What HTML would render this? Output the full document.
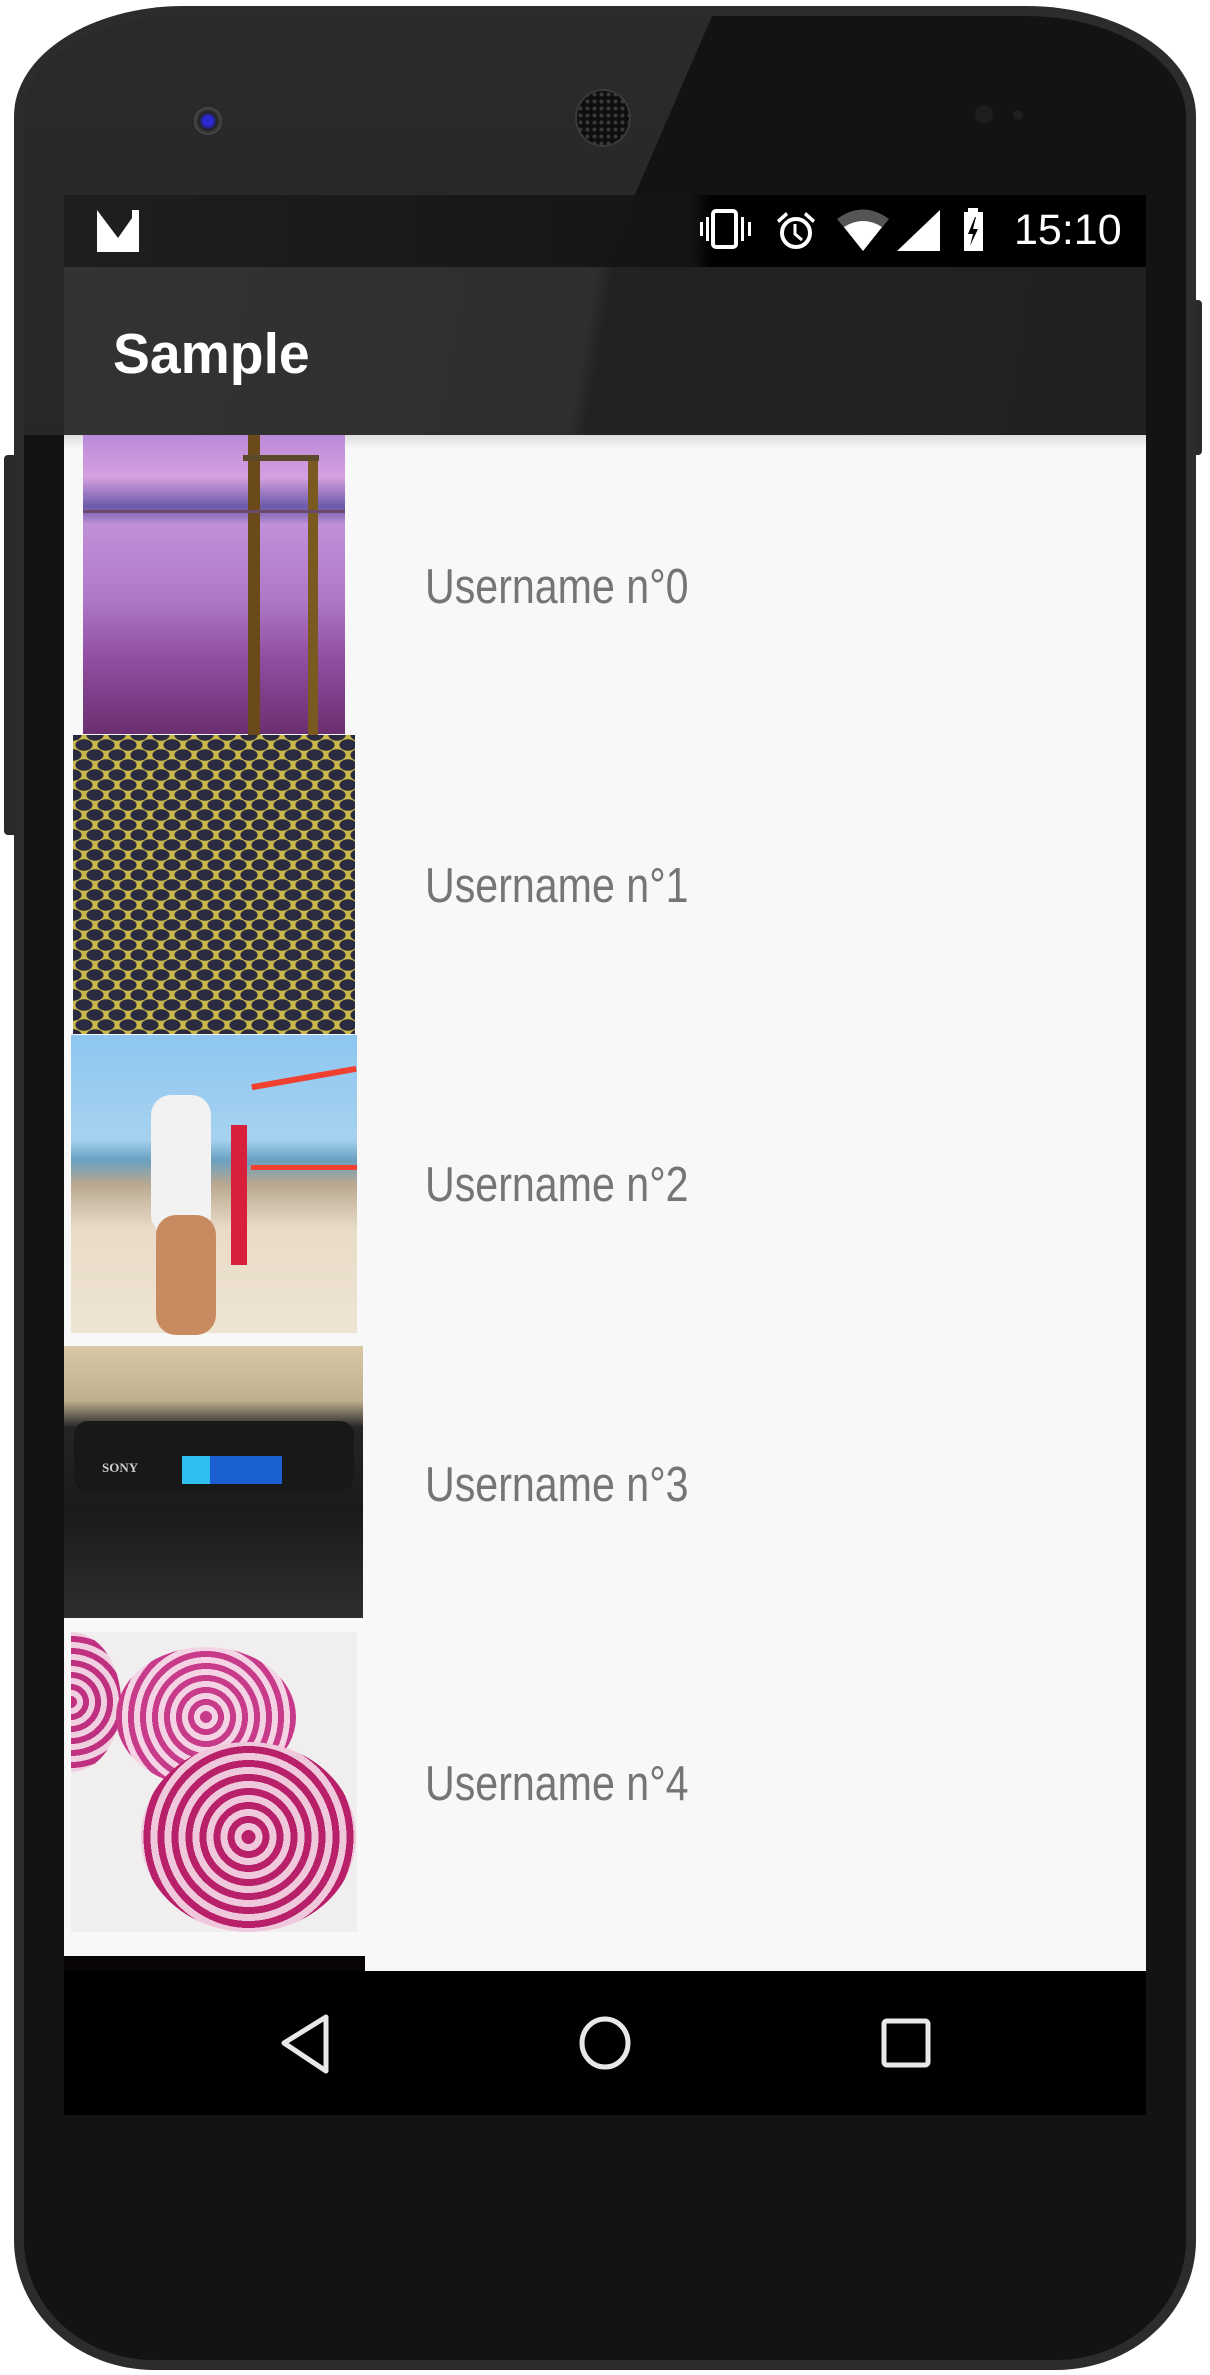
<!DOCTYPE html>
<html><head><meta charset="utf-8"><style>
*{margin:0;padding:0;box-sizing:border-box}
html,body{width:1210px;height:2375px;background:#fff;overflow:hidden;font-family:"Liberation Sans",sans-serif}
.abs{position:absolute}
#phone{left:14px;top:6px;width:1182px;height:2364px;border-radius:170px 170px 140px 140px/110px 110px 130px 130px;background:#2c2c2c;}
#inner{left:24px;top:16px;width:1162px;height:2344px;border-radius:160px 160px 130px 130px/100px 100px 120px 120px;background:#131313;overflow:hidden}
#glare{left:0;top:0;width:760px;height:440px;background:linear-gradient(180deg,#2a2a2a,#272727);clip-path:polygon(0 0,688px 0,507px 419px,0 419px)}
.screen{left:64px;width:1082px}
.txt{position:absolute;left:425px;font-size:49px;color:#757575;transform:scaleX(.84);transform-origin:0 50%;white-space:nowrap}
</style></head><body>
<div class="abs" style="left:1192px;top:300px;width:10px;height:155px;background:#2a2a2a;border-radius:0 4px 4px 0"></div>
<div class="abs" style="left:4px;top:455px;width:12px;height:380px;background:#2a2a2a;border-radius:4px 0 0 4px"></div>
<div id="phone" class="abs"></div>
<div id="inner" class="abs"><div id="glare" class="abs"></div></div>
<div class="abs" style="left:194px;top:107px;width:28px;height:28px;border-radius:50%;background:radial-gradient(circle,#2a2ad0 25%,#222 45%,#555 75%,#333 100%)"></div>
<div class="abs" style="left:575px;top:89px;width:56px;height:58px;border-radius:50%;background:radial-gradient(circle,#3a3a3a 1.5px,#0e0e0e 2.5px) 0 0/7px 7px,#111;border:2px solid #3a3a3a"></div>
<div class="abs" style="left:975px;top:105px;width:18px;height:18px;border-radius:50%;background:#1e1e1e"></div>
<div class="abs" style="left:1013px;top:110px;width:10px;height:10px;border-radius:50%;background:#1e1e1e"></div>
<div class="abs screen" style="top:195px;height:72px;background:linear-gradient(90deg,rgba(30,30,30,.95) 0,rgba(20,20,20,.95) 58%,#000 60%)"></div>
<svg class="abs" style="left:97px;top:210px" width="42" height="42" viewBox="0 0 42 42"><path d="M0 0 L21 28 L35 8 L35 0 L42 0 L42 42 L0 42 Z" fill="#fff"/></svg>
<svg class="abs" style="left:698px;top:208px" width="300" height="46" viewBox="0 0 300 46">
<g fill="#fff">
<rect x="2" y="14" width="3" height="14"/><rect x="8" y="9" width="3" height="24"/>
<rect x="15" y="3" width="23" height="36" rx="3" fill="none" stroke="#fff" stroke-width="4"/>
<rect x="43" y="9" width="3" height="24"/><rect x="50" y="14" width="3" height="14"/>
<circle cx="98" cy="25" r="14" fill="none" stroke="#fff" stroke-width="4"/>
<path d="M97 16 v10 l7 6" fill="none" stroke="#fff" stroke-width="3"/>
<path d="M79 12 l9 -8 l2 3 l-9 8z M117 12 l-9 -8 l-2 3 l9 8z"/>
<path d="M139 11 Q165 -8 191 11 L165 43 Z" fill="#555"/>
<path d="M146 19 Q165 7 184 19 L165 43 Z"/>
<path d="M199 43 L242 2 L242 43 Z"/>
<rect x="270" y="0" width="10" height="4"/>
<rect x="266" y="4" width="19" height="39"/>
<path d="M277 9 L270 26 L275 26 L272 38 L280 21 L275 21 L278 9 Z" fill="#000"/>
</g></svg>
<div class="abs" style="left:1014px;top:207px;font-size:43px;color:#fff;line-height:46px">15:10</div>
<div class="abs screen" style="top:267px;height:168px;background:linear-gradient(100deg,#333 0,#2e2e2e 48%,#222 49.5%,#212121 100%)"></div>
<div class="abs" style="left:113px;top:321px;font-size:57px;font-weight:bold;color:#fff;line-height:66px;transform:scaleX(.97);transform-origin:0 0">Sample</div>
<div class="abs screen" style="top:435px;height:1536px;background:#f8f8f8;overflow:hidden">
<div class="abs" style="left:0;top:0;width:1082px;height:14px;background:linear-gradient(#ddd,#f8f8f8)"></div>
</div>
<div class="abs" style="left:83px;top:435px;width:262px;height:299px;background:linear-gradient(180deg,#b98ad8 0,#d6a0e0 14%,#6a5aa8 24%,#c090d8 30%,#b078c8 55%,#904ea0 75%,#6a2f70 100%)">
<div class="abs" style="left:165px;top:0;width:12px;height:300px;background:#6a4a1a"></div>
<div class="abs" style="left:225px;top:20px;width:10px;height:280px;background:#7a5a20"></div>
<div class="abs" style="left:160px;top:20px;width:76px;height:6px;background:#5a4a2a"></div>
<div class="abs" style="left:0;top:75px;width:262px;height:3px;background:#6a4a6a"></div>
</div>
<div class="abs" style="left:73px;top:735px;width:282px;height:299px;background:radial-gradient(ellipse 9px 6px,#2a2a40 90%,transparent 100%) 0 0/22px 20px,radial-gradient(ellipse 9px 6px,#2a2a40 90%,transparent 100%) 11px 10px/22px 20px,#c9b84a"></div>
<div class="abs" style="left:71px;top:1035px;width:286px;height:298px;background:linear-gradient(180deg,#8ec6f0 0,#a6d2f0 35%,#6aa0c0 42%,#b8a890 50%,#e8dcc8 65%,#efe4d2 100%)">
<div class="abs" style="left:80px;top:60px;width:60px;height:140px;background:#f2f2f2;border-radius:20px"></div>
<div class="abs" style="left:85px;top:180px;width:60px;height:120px;background:#c88a60;border-radius:20px"></div>
<div class="abs" style="left:160px;top:90px;width:16px;height:140px;background:#d8203a"></div>
<div class="abs" style="left:180px;top:40px;width:106px;height:6px;background:#f04030;transform:rotate(-10deg)"></div>
<div class="abs" style="left:180px;top:130px;width:106px;height:5px;background:#f04030"></div>
</div>
<div class="abs" style="left:64px;top:1346px;width:299px;height:272px;background:linear-gradient(180deg,#d8c8a8 0,#c0b090 20%,#252525 30%,#1a1a1a 60%,#2e2e2e 100%)">
<div class="abs" style="left:10px;top:75px;width:280px;height:70px;background:#181818;border-radius:14px"></div>
<div class="abs" style="left:118px;top:110px;width:100px;height:28px;background:#1a60d0"></div>
<div class="abs" style="left:118px;top:110px;width:28px;height:28px;background:#30c0f0"></div>
<div class="abs" style="left:38px;top:114px;font-size:13px;color:#ccc;font-family:'Liberation Serif',serif;font-weight:bold">SONY</div>
</div>
<div class="abs" style="left:71px;top:1632px;width:286px;height:300px;background:#f0eeee;overflow:hidden">
<div class="abs" style="left:-50px;top:0;width:100px;height:140px;border-radius:50%;background:repeating-radial-gradient(circle,#c03080 0 6px,#f0d0e0 6px 12px)"></div>
<div class="abs" style="left:45px;top:15px;width:180px;height:140px;border-radius:50%;background:repeating-radial-gradient(circle,#c83a8a 0 6px,#f4d4e4 6px 12px)"></div>
<div class="abs" style="left:70px;top:110px;width:215px;height:190px;border-radius:50%;background:repeating-radial-gradient(circle,#b8206a 0 7px,#f0c8dc 7px 14px)"></div>
</div>
<div class="abs" style="left:64px;top:1956px;width:301px;height:15px;background:#0a0505"></div>
<div class="txt" style="top:559px">Username n°0</div>
<div class="txt" style="top:858px">Username n°1</div>
<div class="txt" style="top:1157px">Username n°2</div>
<div class="txt" style="top:1457px">Username n°3</div>
<div class="txt" style="top:1756px">Username n°4</div>
<div class="abs screen" style="top:1971px;height:144px;background:#000"></div>
<svg class="abs" style="left:0;top:1971px" width="1210" height="144" viewBox="0 0 1210 144">
<path d="M326 46 L326 100 L284 72 Z" fill="none" stroke="#e8e8e8" stroke-width="5" stroke-linejoin="round"/>
<ellipse cx="605" cy="72" rx="23" ry="24" fill="none" stroke="#e8e8e8" stroke-width="5"/>
<rect x="884" y="50" width="44" height="44" rx="3" fill="none" stroke="#e8e8e8" stroke-width="5"/>
</svg>
</body></html>
